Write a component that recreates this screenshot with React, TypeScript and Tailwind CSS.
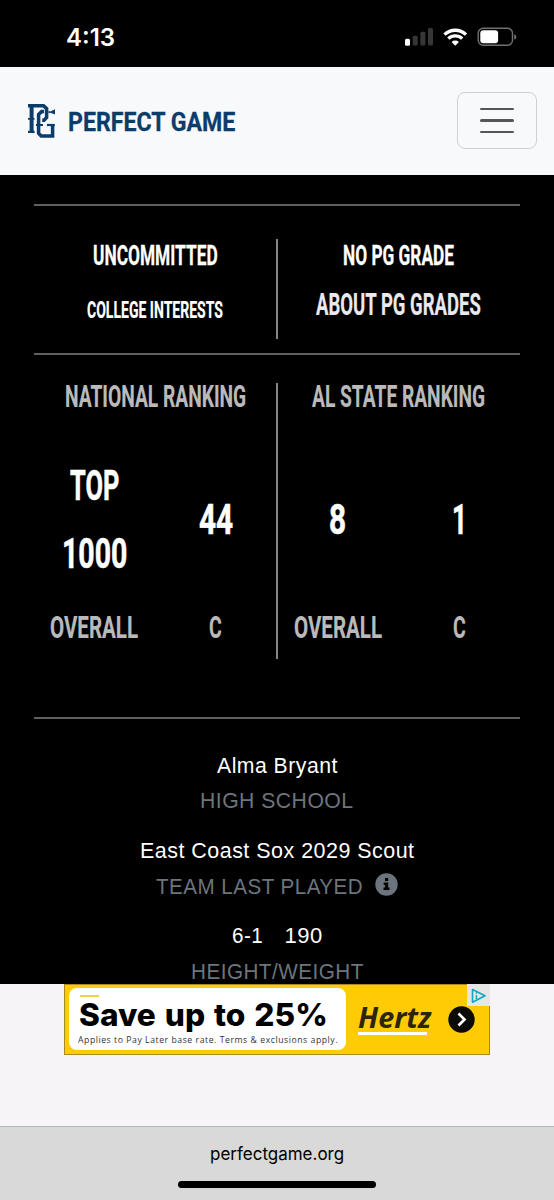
import { useLayoutEffect, useRef, useState } from "react";
import type { ReactNode } from "react";

/** A single line of text, condensed or widened to an exact width. */
function Fit({ w, className = "", children }: { w: number; className?: string; children: ReactNode }) {
  const ref = useRef<HTMLSpanElement>(null);
  const [scale, setScale] = useState(1);
  useLayoutEffect(() => {
    if (ref.current && ref.current.offsetWidth > 0) setScale(w / ref.current.offsetWidth);
  }, [w]);
  return (
    <span className={`block shrink-0 ${className}`} style={{ width: w }}>
      <span ref={ref} className="inline-block origin-left whitespace-nowrap align-top" style={{ transform: `scaleX(${scale})` }}>
        {children}
      </span>
    </span>
  );
}

const display = "font-['Roboto',sans-serif] font-bold";

function StatusBar() {
  return (
    <div className="flex h-[67px] items-start justify-between bg-black pl-[66px] pr-[37px] pt-[22px]">
      <Fit w={49} className="font-['Inter',sans-serif] text-[24px] font-semibold leading-[31px] text-white">4:13</Fit>
      <svg width="112" height="20" viewBox="0 0 112 20" className="mt-[5px]">
        <rect x="0" y="11.7" width="5" height="7" rx="1.5" fill="#fff" />
        <rect x="7.7" y="8.8" width="5" height="9.8" rx="1.5" fill="#363636" />
        <rect x="15.4" y="4.8" width="5" height="13.8" rx="1.5" fill="#363636" />
        <rect x="23" y="1" width="5" height="17.6" rx="1.5" fill="#363636" />
        <g fill="none" stroke="#fff" strokeWidth="3.3">
          <path d="M39.5 7.6A15.4 15.4 0 0 1 61 7.6" />
          <path d="M43.3 11.6A10 10 0 0 1 57.2 11.6" />
        </g>
        <path d="M50.2 18.7 46.6 14.9A5.2 5.2 0 0 1 53.9 14.9Z" fill="#fff" />
        <rect x="73.2" y="1.2" width="34.3" height="17" rx="5" fill="none" stroke="#707070" strokeWidth="1.4" />
        <rect x="75.3" y="3.3" width="17.8" height="12.9" rx="3" fill="#fff" />
        <path d="M109.2 7.2Q111.4 7.8 111.4 9.9T109.2 12.6Z" fill="#707070" />
      </svg>
    </div>
  );
}

function Header() {
  return (
    <header className="flex h-[108px] items-center justify-between bg-[#f8f9fb] pl-[28px] pr-[17px]">
      <div className="flex items-center gap-[12px]">
        <svg width="28" height="34" viewBox="0 0 28 34" fill="none" stroke="#0c3c69" strokeWidth="3.5">
          <path d="M0 1.7H15.5L18.6 4.6V13.6L16 16.2H14.2" />
          <path d="M3.6 1V27.5" strokeWidth="4" />
          <path d="M0 27.9H6.6" strokeWidth="2.2" />
          <path d="M0 14.8H6.5M8 21H15" strokeWidth="1.8" />
          <path d="M16 7.6H13.6L10.6 10.4V29.4L13.2 32H24.6V20.6" />
          <path d="M19 21H26.8" strokeWidth="2.2" />
          <path d="M20.5 6.8L22.4 7.4L27 5.2V10.6L22.4 8.8L20.5 9.2Z" fill="#0c3c69" stroke="none" />
        </svg>
        <Fit w={167} className={`${display} mt-px text-[25.5px] leading-8 text-[#0c3c69] [-webkit-text-stroke:0.3px_#0c3c69]`}>PERFECT GAME</Fit>
      </div>
      <button className="-mt-px flex h-[57px] w-[80px] flex-col items-center justify-center gap-[8.7px] rounded-[8px] border-[1.5px] border-[#cfd0d2]">
        <span className="h-[2.8px] w-[34px] rounded-full bg-[#55565a]" />
        <span className="h-[2.8px] w-[34px] rounded-full bg-[#55565a]" />
        <span className="h-[2.8px] w-[34px] rounded-full bg-[#55565a]" />
      </button>
    </header>
  );
}

function Stat({ lines, label, labelWidth }: { lines: { text: string; w: number }[]; label: string; labelWidth: number }) {
  return (
    <div className="flex w-[121.5px] flex-col items-center">
      <div className="flex h-[176px] flex-col items-center justify-center">
        {lines.map((l) => (
          <Fit key={l.text} w={l.w} className="text-[42px] leading-[68px] text-white [-webkit-text-stroke:0.6px_#fff]">{l.text}</Fit>
        ))}
      </div>
      <Fit w={labelWidth} className="text-[31.5px] leading-10 text-[#bababa] [-webkit-text-stroke:0.2px_#bababa]">{label}</Fit>
    </div>
  );
}

function Detail({ children, label }: { children: ReactNode; label: ReactNode }) {
  return (
    <div className="flex h-[85.3px] flex-col items-center text-[22px] tracking-[0.5px]">
      <div className="flex h-[35.5px] items-center text-white">{children}</div>
      <div className="flex h-[35.5px] items-center text-[#6c757d]">{label}</div>
    </div>
  );
}

function Ad() {
  return (
    <div className="relative flex h-[71px] w-[426px] items-center border border-[#a88b1c] bg-[#ffcb05] pl-[4px]">
      <div className="flex h-[62px] w-[277px] flex-col rounded-[8px] bg-white pl-[9px]">
        <span className="ml-[2px] mt-[7px] h-[2px] w-[19px] bg-[#f2cf4e]" />
        <Fit w={249} className="ml-px mt-[2px] font-['Inter',sans-serif] text-[31px] font-extrabold leading-[32px] text-black [word-spacing:2px]">Save up to 25%</Fit>
        <Fit w={260} className="mt-[2px] font-['Open_Sans',sans-serif] text-[9.5px] leading-[13px] tracking-[0.6px] text-[#333]">
          Applies to Pay Later base rate. Terms &amp; exclusions apply.
        </Fit>
      </div>
      <div className="ml-[12px] flex flex-col">
        <Fit w={73} className="font-['Open_Sans',sans-serif] text-[28px] font-bold italic leading-[27px] text-[#2d2509]">Hertz</Fit>
        <span className="mt-px h-[3px] w-[69px] bg-white" />
      </div>
      <svg width="27" height="27" viewBox="0 0 27 27" className="ml-[17px]" fill="none">
        <circle cx="13.5" cy="13.5" r="13.2" fill="#0b0a05" />
        <path d="M10.5 7.5 16.5 13.5 10.5 19.5" stroke="#fff" strokeWidth="2.7" />
      </svg>
      <svg width="23" height="22" viewBox="0 0 23 22" className="absolute -right-px -top-px" fill="none">
        <rect width="23" height="22" fill="#e6e6e6" />
        <path d="M5.5 5.5V18.2L18 11.8Z" stroke="#12a7c0" strokeWidth="1.6" strokeLinejoin="round" />
        <path d="M9.4 11V15M9.4 8.3V9.7" stroke="#12a7c0" strokeWidth="1.5" />
      </svg>
    </div>
  );
}

export default function App() {
  return (
    <div className="flex h-[1200px] w-[554px] flex-col overflow-hidden bg-[#f6f4f6] font-['Liberation_Sans',sans-serif]">
      <StatusBar />
      <Header />
      <main className="h-[808.5px] overflow-hidden bg-black px-[34px] pt-[29px]">
        <section className={`${display} flex h-[149px] border-t-2 border-[#5e5f5f] pt-[33px]`}>
          <div className="flex w-[242px] flex-col items-center pt-px">
            <Fit w={125} className="text-[28px] leading-8 text-white [-webkit-text-stroke:0.3px_#fff]">UNCOMMITTED</Fit>
            <Fit w={136} className="mt-[23px] text-[23px] leading-8 text-white [-webkit-text-stroke:0.2px_#fff]">COLLEGE INTERESTS</Fit>
          </div>
          <div className="h-[100px] w-[2px] bg-[#858585]" />
          <div className="flex w-[241px] flex-col items-center pt-px">
            <Fit w={111} className="text-[28px] leading-8 text-white [-webkit-text-stroke:0.3px_#fff]">NO PG GRADE</Fit>
            <Fit w={165} className="mt-[17px] text-[31px] leading-8 text-[#e9e9ef] [-webkit-text-stroke:0.2px_#e9e9ef]">ABOUT PG GRADES</Fit>
          </div>
        </section>
        <section className={`${display} flex h-[364px] border-t-2 border-[#5e5f5f] pt-[28px]`}>
          <div className="flex w-[242px] flex-col items-center">
            <Fit w={181} className="-mt-px text-[31.5px] leading-[29px] text-[#bababa] [-webkit-text-stroke:0.2px_#bababa]">NATIONAL RANKING</Fit>
            <div className="mt-[21px] flex">
              <Stat lines={[{ text: "TOP", w: 49 }, { text: "1000", w: 65 }]} label="OVERALL" labelWidth={88} />
              <Stat lines={[{ text: "44", w: 34 }]} label="C" labelWidth={13} />
            </div>
          </div>
          <div className="h-[276px] w-[2px] bg-[#858585]" />
          <div className="flex w-[241px] flex-col items-center">
            <Fit w={173} className="-mt-px text-[31.5px] leading-[29px] text-[#bababa] [-webkit-text-stroke:0.2px_#bababa]">AL STATE RANKING</Fit>
            <div className="mt-[21px] flex">
              <Stat lines={[{ text: "8", w: 17 }]} label="OVERALL" labelWidth={88} />
              <Stat lines={[{ text: "1", w: 15 }]} label="C" labelWidth={13} />
            </div>
          </div>
        </section>
        <section className="border-t-2 border-[#5e5f5f] pt-[28.5px]">
          <Detail label={<Fit w={154}>HIGH SCHOOL</Fit>}>
            <Fit w={120.5}>Alma Bryant</Fit>
          </Detail>
          <Detail
            label={
              <div className="flex items-center gap-[12px]">
                <Fit w={207}>TEAM LAST PLAYED</Fit>
                <svg width="23" height="23" viewBox="0 0 23 23" className="-mt-[3px]">
                  <circle cx="11.5" cy="11.5" r="11.2" fill="#6c757d" />
                  <path d="M10 5H13.2V8.1H10ZM8.7 9.6H13.2V14.6H14.5V17H8.5V14.6H10V12H8.7Z" fill="#000" />
                </svg>
              </div>
            }
          >
            <Fit w={275}>East Coast Sox 2029 Scout</Fit>
          </Detail>
          <Detail label={<Fit w={173}>HEIGHT/WEIGHT</Fit>}>
            <div className="flex gap-[22px]">
              <Fit w={31}>6-1</Fit>
              <Fit w={38}>190</Fit>
            </div>
          </Detail>
        </section>
      </main>
      <div className="flex h-[142px] justify-center">
        <Ad />
      </div>
      <footer className="flex flex-1 flex-col items-center border-t border-[#b5b8b8] bg-[#d9d9d9] pt-[15px]">
        <Fit w={134} className="font-['Inter',sans-serif] text-[17.5px] leading-6 text-black">perfectgame.org</Fit>
        <div className="mt-[15px] h-[7px] w-[198px] rounded-full bg-black" />
      </footer>
    </div>
  );
}
